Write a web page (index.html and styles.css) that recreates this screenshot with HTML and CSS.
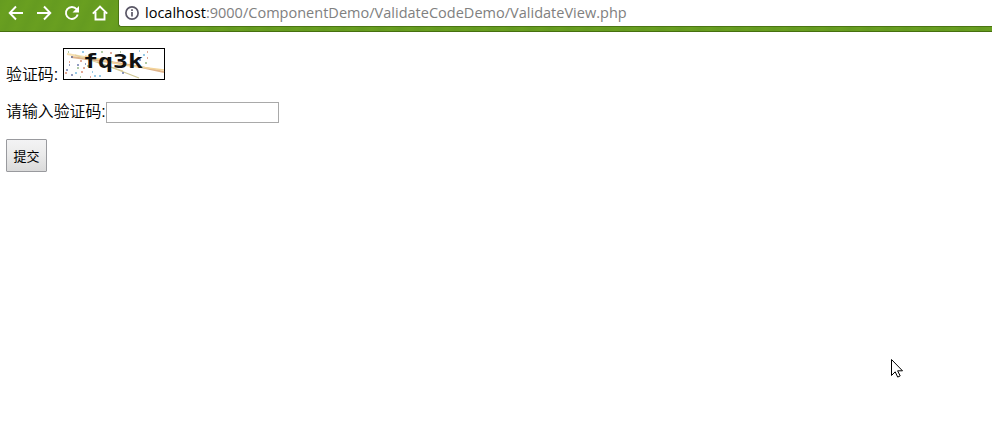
FILE: index.html
```html
<!DOCTYPE html>
<html lang="zh-CN">
<head>
<meta charset="utf-8">
<title>ValidateView</title>
<link rel="stylesheet" href="styles.css">
</head>
<body>
<header class="toolbar">
  <nav class="nav">
    <svg width="16" height="16" viewBox="0 0 16 16"><path d="M8 1.500 1.700 8 8 14.500M2 8h13"/></svg>
    <svg width="16" height="16" viewBox="0 0 16 16"><path d="M8 1.500 14.300 8 8 14.500M14 8H1"/></svg>
    <svg width="16" height="16" viewBox="0 0 16 16"><path d="M12.600 4.200A6 6 0 1 0 13.700 9.500"/><path class="solid" d="M15 1v6.500H8.500z"/></svg>
    <svg width="16" height="16" viewBox="0 0 16 16"><path d="M.8 8.600 8 1.500l7.200 7.100M3.500 7v7.500h9V7"/></svg>
  </nav>
  <div class="address">
    <svg class="info" width="14" height="14" viewBox="0 0 14 14"><circle cx="7" cy="7" r="6.100"/><path d="M7 6v4.500M7 3.300v1.700"/></svg>
    <div class="url"><span class="host">localhost</span>:9000/ComponentDemo/ValidateCodeDemo/ValidateView.php</div>
  </div>
</header>
<main class="page">
  <div class="row code-row">
    <span class="label">验证码:</span>
    <svg class="captcha" width="102" height="32" viewBox="0 0 102 32">
      <rect class="frame" x=".5" y=".5" width="101" height="31"/>
      <g class="lines">
        <path stroke="#f6dfb0" stroke-width="2.200" d="M4 6 50 14"/>
        <path stroke="#dfb48c" stroke-width="2" d="M8 9 54 15 78 19 101 24"/>
        <path stroke="#f3d49a" stroke-width="1.500" d="M22 8 60 17 101 22"/>
        <path stroke="#e3d09c" stroke-width="1.300" d="M12 7 60 23"/>
        <path stroke="#cfc693" stroke-width="1.200" d="M34 14 58 23 76 30"/>
      </g>
      <g class="dots">
        <path stroke="#4b5c9c" d="M8 9h2M14 17h2M3 22h2M8 27h2M76 12h2M22 16h1M59 25h2M6 17h1"/>
        <path stroke="#59a9d8" d="M19 4h2M25 7h2M31 28h2M68 7h2M12 25h2M80 7h2M76 3h1M36 28h2M29 24h1"/>
        <path stroke="#cf7454" d="M2 25h2M17 13h2M18 24h2M27 29h1M84 10h1M47 5h2M6 14h1M20 20h2M84 4h1"/>
        <path stroke="#7faa6e" d="M14 20h2M5 4h1M24 18h2M38 4h2M57 4h1M82 15h2M17 29h1"/>
      </g>
      <text class="chars" x="20" y="20" textLength="60" lengthAdjust="spacingAndGlyphs">fq3k</text>
    </svg>
  </div>
  <div class="row input-row">
    <span class="label">请输入验证码:</span><input class="field" type="text">
  </div>
  <button class="submit" type="button">提交</button>
</main>
<svg class="cursor" width="14" height="21" viewBox="0 0 14 21"><path d="M1.500 1.500v16l3.700-3.700 2.500 5.300 2.500-1.200-2.600-5.100h4.900z"/></svg>
</body>
</html>
```
FILE: styles.css
```css
* { box-sizing: border-box; }
body {
  margin: 0;
  height: 425px;
  overflow: hidden;
  background: #fff;
  color: #000;
  font-family: "Noto Sans", "Noto Sans CJK SC", sans-serif;
}
.toolbar {
  display: flex;
  align-items: flex-start;
  height: 32px;
  border-bottom: 1px solid #46700f;
  background: repeating-linear-gradient(115deg, #659b20, #699f20 9px, #659b20 17px);
}
.nav {
  display: flex;
  gap: 12px;
  width: 119px;
  padding: 5px 0 0 8px;
}
.nav svg { fill: none; stroke: #fff; stroke-width: 1.900; }
.nav .solid { fill: #fff; stroke: none; }
.address {
  flex: 1;
  display: flex;
  height: 27px;
  padding-left: 6px;
  border-bottom: 1px solid #4a7512;
  border-left: 1px solid #4a7512;
  border-radius: 0 0 0 3px;
  background: #fff;
  margin-left: -1px;
}
.info { margin-top: 6px; fill: none; stroke: #5a5766; stroke-width: 1.700; }
.url {
  margin-left: 6px;
  color: #808080;
  font: 14.500px/26px "Open Sans", sans-serif;
  letter-spacing: .015px;
  white-space: nowrap;
}
.host { color: #000; }
.page {
  display: flex;
  flex-direction: column;
  align-items: flex-start;
  padding: 16px 6px;
}
.row { display: flex; }
.label {
  font: 350 15.900px/22px "Liberation Sans", "Noto Sans CJK SC", sans-serif;
  white-space: nowrap;
}
.code-row { height: 54px; }
.code-row .label { width: 57px; padding-top: 16px; }
.input-row { height: 37px; }
.input-row .label { width: 100px; margin-top: -1px; }
.field {
  width: 173px;
  height: 21px;
  padding: 1px;
  border: 1px solid #a9a9a9;
  background: #fff;
}
.submit {
  width: 41px;
  height: 33px;
  padding: 0;
  border: 1px solid #999a9e;
  border-radius: 1px;
  background: linear-gradient(#f3f3f4, #ebebeb 45%, #dadada);
  font: 13px "Noto Sans CJK SC", sans-serif;
  color: #000;
}
.captcha { display: block; }
.frame { fill: #fff; stroke: #000; }
.lines, .dots { fill: none; }
.dots { stroke-width: 1.500; opacity: .8; }
.chars { font: bold 20px "DejaVu Sans Mono", monospace; fill: #111; }
.cursor {
  position: absolute;
  left: 890px;
  top: 358px;
  fill: #fff;
  stroke: #000;
  stroke-width: 1;
}
```
